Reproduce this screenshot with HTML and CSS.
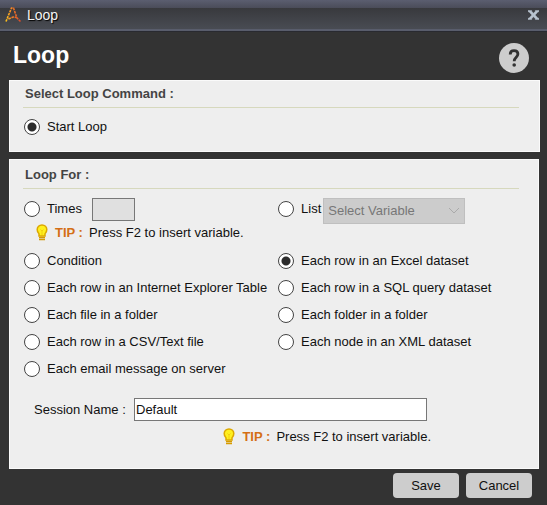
FILE: index.html
```html
<!DOCTYPE html>
<html lang="en">
<head>
    <meta charset="UTF-8">
    <meta name="viewport" content="width=device-width, initial-scale=1.0">
    <title>Loop</title>
    <link rel="stylesheet" href="styles.css">
</head>
<body>
    <!-- Shared lightbulb icon -->
    <svg class="symbols" aria-hidden="true">
        <symbol id="bulb" viewBox="0 0 12 17">
            <path d="M6 1C3.200 1 1.200 3 1.200 5.600C1.200 7.800 2.200 8.600 3 9.800V12H9V9.800C9.800 8.600 10.800 7.800 10.800 5.600C10.800 3 8.800 1 6 1Z" fill="#fff01e" stroke="#dca800" stroke-width="1.500"/>
            <path d="M4.500 5.500L6 7L7.500 5.500M6 7V11" fill="none" stroke="#f2cf10"/>
            <path d="M3 13.500H9M3 15.500H9" stroke="#d69b00" stroke-width="1.600"/>
        </symbol>
    </svg>

    <form class="dialog">
        <div class="title-bar">
            <svg class="logo" viewBox="0 0 18 18" aria-hidden="true">
                <defs>
                    <linearGradient id="logo-color">
                        <stop offset="0" stop-color="#ffc31c"/>
                        <stop offset="0.4" stop-color="#f08025"/>
                        <stop offset="1" stop-color="#d8492b"/>
                    </linearGradient>
                </defs>
                <path d="M2 15.500L7.500 2H9.500L13 12L16.500 15.500M4.500 13L9 11L12.500 11.500" fill="none" stroke="url(#logo-color)" stroke-width="1.600" stroke-dasharray="2.500 0.800"/>
            </svg>
            <span class="window-title">Loop</span>
            <button type="button" class="close-btn" aria-label="Close">
                <svg viewBox="0 0 12 10" aria-hidden="true">
                    <path d="M0 0H4V1L6 3L8 1V0H12V1.500H11L7.800 5L11 8.500H12V10H8V9L6 7L4 9V10H0V8.500H1L4.200 5L1 1.500H0Z" fill="#b9c4d0" stroke="#b9c4d0" stroke-width="0.500"/>
                </svg>
            </button>
        </div>

        <header class="header">
            <h1>Loop</h1>
            <button type="button" class="help-btn" aria-label="Help">
                <svg viewBox="0 0 30 30" aria-hidden="true">
                    <circle cx="15" cy="15" r="15" fill="#cdcdcd"/>
                    <path d="M11.200 11.500C11.200 9 12.800 7.700 15 7.700C17.300 7.700 18.900 9 18.900 11.100C18.900 14.200 15.200 14.300 15.200 18.200" fill="none" stroke="#333" stroke-width="2.800"/>
                    <circle cx="15.200" cy="22" r="1.800" fill="#333"/>
                </svg>
            </button>
        </header>

        <section class="panel">
            <h2>Select Loop Command :</h2>
            <div class="command">
                <label class="option"><input type="radio" name="command" checked> Start Loop</label>
            </div>
        </section>

        <section class="panel loop-for">
            <h2>Loop For :</h2>
            <div class="options inputs-row">
                <div class="field">
                    <label class="option times"><input type="radio" name="loop"> Times</label>
                    <input type="text" class="times-input" aria-label="Number of times" disabled>
                </div>
                <div class="field">
                    <label class="option"><input type="radio" name="loop"> List</label>
                    <select class="list-select" aria-label="List variable" disabled>
                        <option>Select Variable</option>
                    </select>
                </div>
            </div>
            <p class="tip">
                <svg class="bulb"><use href="#bulb"/></svg>
                <strong>TIP :</strong>
                <span>Press F2 to insert variable.</span>
            </p>
            <div class="options">
                <label class="option"><input type="radio" name="loop"> Condition</label>
                <label class="option"><input type="radio" name="loop" checked> Each row in an Excel dataset</label>
                <label class="option"><input type="radio" name="loop"> Each row in an Internet Explorer Table</label>
                <label class="option"><input type="radio" name="loop"> Each row in a SQL query dataset</label>
                <label class="option"><input type="radio" name="loop"> Each file in a folder</label>
                <label class="option"><input type="radio" name="loop"> Each folder in a folder</label>
                <label class="option"><input type="radio" name="loop"> Each row in a CSV/Text file</label>
                <label class="option"><input type="radio" name="loop"> Each node in an XML dataset</label>
                <label class="option"><input type="radio" name="loop"> Each email message on server</label>
            </div>
            <div class="session">
                <label for="session-name">Session Name :</label>
                <input type="text" id="session-name" value="Default">
                <p class="tip">
                    <svg class="bulb"><use href="#bulb"/></svg>
                    <strong>TIP :</strong>
                    <span>Press F2 to insert variable.</span>
                </p>
            </div>
        </section>

        <footer class="actions">
            <button type="submit">Save</button>
            <button type="button">Cancel</button>
        </footer>
    </form>
</body>
</html>
```
FILE: styles.css
```css
* {
    box-sizing: border-box;
}

body {
    margin: 0;
    background-color: #333;
    color: #111;
    font-family: "Liberation Sans", Arial, sans-serif;
    font-size: 13px;
    line-height: 16px;
}

button,
input,
select {
    font: inherit;
    color: inherit;
}

h1,
h2,
p {
    margin: 0;
}

.symbols {
    display: none;
}

/* Window title bar */
.title-bar {
    display: flex;
    align-items: center;
    height: 32px;
    padding: 0 8px 2px 4px;
    background: linear-gradient(#5b5e70, #4a4c59 8px, #38393d 8px, #484b52 28px);
    border-bottom: 1px solid #292a30;
    box-shadow: inset 0 -2px 0 #595d6c;
}

.logo {
    width: 18px;
    height: 18px;
}

.window-title {
    flex: 1;
    margin-left: 5px;
    color: #f4f4f4;
    font-size: 14px;
    text-shadow: 1px 1px 1px #000;
}

.close-btn,
.help-btn {
    display: flex;
    padding: 0;
    background: none;
    border: none;
    cursor: pointer;
}

.close-btn svg {
    width: 11px;
    height: 10px;
}

.header {
    display: flex;
    align-items: center;
    justify-content: space-between;
    height: 48px;
    padding: 4px 18px 0 13px;
}

h1 {
    padding-bottom: 6px;
    color: #fff;
    font-size: 23px;
    line-height: 28px;
}

.help-btn svg {
    width: 30px;
    height: 30px;
}

/* Panels */
.panel {
    margin: 0 7px 7px 9px;
    padding: 5px 20px 16px 13px;
    background-color: #eee;
    border: 1px solid #fafafa;
}

h2 {
    padding: 0 2px 5px;
    color: #444;
    font-size: 13px;
    line-height: 16px;
    border-bottom: 1px solid #d6d8bd;
}

.command {
    padding-top: 11px;
}

.loop-for {
    margin-right: 8px;
    margin-bottom: 4px;
    padding: 7px 19px 23px 13px;
}

/* Radio options */
.options {
    display: grid;
    grid-template-columns: 21fr 20fr;
    row-gap: 11px;
}

.option {
    display: flex;
    align-items: center;
    gap: 7px;
    padding-left: 1px;
    white-space: nowrap;
}

input[type="radio"] {
    appearance: none;
    width: 16px;
    height: 16px;
    margin: 0;
    background-color: #fff;
    border: 1px solid #444;
    border-radius: 50%;
}

input[type="radio"]:checked {
    background: radial-gradient(circle, #2b2b2b 4px, #fff 5px);
}

.inputs-row {
    padding-top: 9px;
}

.field {
    display: flex;
    align-items: flex-start;
}

.field .option {
    height: 22px;
}

.times {
    width: 69px;
}

.times-input {
    width: 43px;
    height: 23px;
    background-color: #e0e0e0;
    border: 1px solid #777;
}

.list-select {
    appearance: none;
    width: 142px;
    height: 26px;
    margin-left: 2px;
    padding: 0 4px;
    color: #777;
    background: #ccc url("data:image/svg+xml,%3Csvg xmlns='http://www.w3.org/2000/svg' width='10' height='6'%3E%3Cpath d='M0 0L5 5L10 0' fill='none' stroke='%23aaa'/%3E%3C/svg%3E") no-repeat right 5px center;
    border: 1px solid #bfbfbf;
    border-radius: 0;
    opacity: 1;
}

.tip {
    display: flex;
    align-items: center;
    padding: 0 0 12px 13px;
}

.tip strong {
    width: 34px;
    margin-left: 7px;
    color: #d46f16;
}

.bulb {
    width: 12px;
    height: 17px;
}

/* Session name */
.session {
    display: grid;
    grid-template-columns: 100px 293px;
    align-items: center;
    row-gap: 7px;
    padding: 21px 0 0 11px;
}

.session input {
    height: 23px;
    padding: 0 1px;
    background-color: #fff;
    border: 1px solid #777;
}

.session .tip {
    grid-column: 2;
    justify-content: flex-end;
    padding: 0;
    margin-right: -4px;
}

/* Buttons */
.actions {
    display: flex;
    justify-content: flex-end;
    gap: 7px;
    padding: 0 15px 7px;
}

.actions button {
    width: 66px;
    height: 25px;
    padding: 0;
    background-color: #cdcdcd;
    border: none;
    border-radius: 4px;
    font-size: 13px;
    cursor: pointer;
}
```
